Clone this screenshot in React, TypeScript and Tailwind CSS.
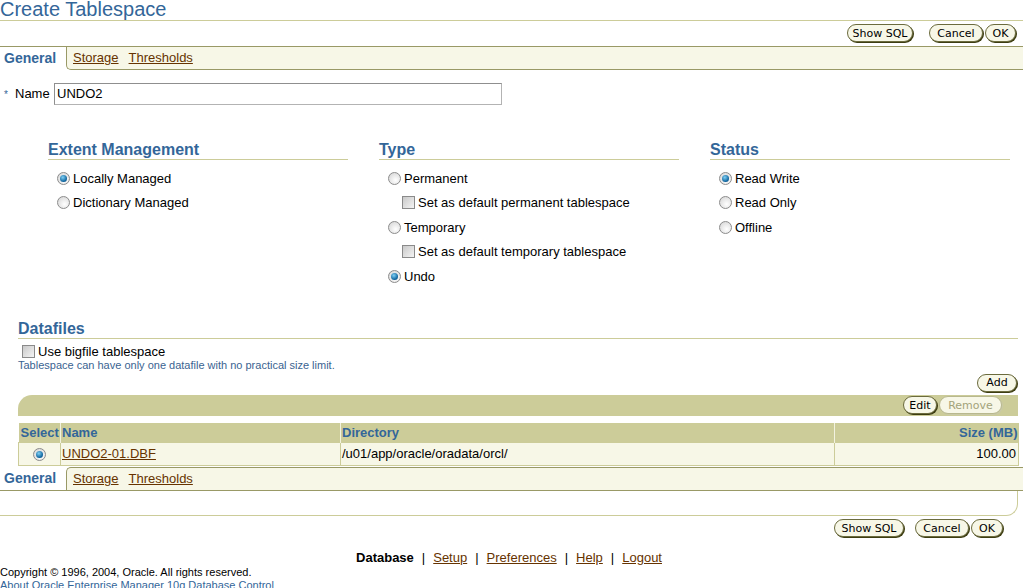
import React from "react";

const blue = "text-[#336699]";

function Btn({ label, w, disabled }: { label: string; w: string; disabled?: boolean }) {
  return (
    <span
      className={`inline-flex h-[18px] items-center justify-center rounded-full bg-[#f7f7e7] font-['DejaVu_Sans',Tahoma,sans-serif] text-[11px] leading-none ${w} ${
        disabled
          ? "border border-[#b8b88e] text-[#a3a37a] shadow-[1px_1px_0_0_#c9c9a6]"
          : "border border-[#6b6b3d] text-black shadow-[1px_1px_0_0_#3d3d12]"
      }`}
    >
      {label}
    </span>
  );
}

function Radio({ checked }: { checked?: boolean }) {
  return (
    <span className="inline-flex h-[13px] w-[13px] shrink-0 items-center justify-center rounded-full border border-[#8c8c8c] bg-[radial-gradient(circle_at_60%_65%,#ffffff,#d2d2d2)]">
      {checked && (
        <span className="h-[7px] w-[7px] rounded-full bg-[radial-gradient(circle_at_40%_35%,#7fd0f5,#0a5f99_70%,#083c66)]" />
      )}
    </span>
  );
}

function Check() {
  return (
    <span className="inline-block h-[13px] w-[13px] shrink-0 border border-[#8a8a8a] bg-[linear-gradient(135deg,#c9c9c9,#f4f4f4)]" />
  );
}

function Option({ label, checked, box }: { label: string; checked?: boolean; box?: boolean }) {
  return (
    <div className={`flex h-[24.5px] items-center gap-[3px] ${box ? "pl-[14px]" : ""}`}>
      {box ? <Check /> : <Radio checked={checked} />}
      <span>{label}</span>
    </div>
  );
}

function Section({ title, children }: { title: string; children: React.ReactNode }) {
  return (
    <div>
      <div className={`h-[19px] border-b border-[#cccc99] text-[16px] font-bold leading-[18px] ${blue}`}>{title}</div>
      <div className="mt-[6px] pl-[9px]">{children}</div>
    </div>
  );
}

function Tabs({ top }: { top?: boolean }) {
  return (
    <div className={`flex h-[24px] ${top ? "border-t border-[#999966]" : "border-b border-[#999966]"}`}>
      <div className={`flex w-[66px] items-center pl-[4px] text-[14px] font-bold ${blue}`}>General</div>
      <div
        className={`flex flex-1 items-center gap-[10px] border-l border-[#999966] bg-[#f7f7e7] pl-[6px] text-[13px] ${
          top ? "rounded-bl-[5px] border-b" : "rounded-tl-[5px] border-t"
        }`}
      >
        <a className="text-[#663300] underline">Storage</a>
        <a className="text-[#663300] underline">Thresholds</a>
      </div>
    </div>
  );
}

export default function App() {
  return (
    <div className="h-[588px] w-[1023px] overflow-hidden bg-white font-['Liberation_Sans',Arial,sans-serif] text-[13px] text-black">
      <h1 className={`h-[21px] border-b border-[#cccc99] text-[20px] leading-[19px] ${blue}`}>Create Tablespace</h1>

      <div className="mt-[3px] flex justify-end pr-[7px]">
        <Btn label="Show SQL" w="w-[66px]" />
        <span className="w-[16px]" />
        <Btn label="Cancel" w="w-[54px]" />
        <span className="w-[2px]" />
        <Btn label="OK" w="w-[31px]" />
      </div>

      <div className="mt-[4px]">
        <Tabs top />
      </div>

      <div className="mt-[13px] flex items-center">
        <span className={`w-[15px] pl-[4px] text-[10px] ${blue}`}>*</span>
        <span className="w-[39px]">Name</span>
        <div className="flex h-[22px] w-[448px] items-center border border-[#b3b3b3] border-t-[#8f8f8f] border-l-[#8f8f8f] pl-[2px]">
          UNDO2
        </div>
      </div>

      <div className="mt-[36px] grid grid-cols-[300px_300px_300px] gap-x-[31px] pl-[48px]">
        <Section title="Extent Management">
          <Option label="Locally Managed" checked />
          <Option label="Dictionary Managed" />
        </Section>
        <Section title="Type">
          <Option label="Permanent" />
          <Option label="Set as default permanent tablespace" box />
          <Option label="Temporary" />
          <Option label="Set as default temporary tablespace" box />
          <Option label="Undo" checked />
        </Section>
        <Section title="Status">
          <Option label="Read Write" checked />
          <Option label="Read Only" />
          <Option label="Offline" />
        </Section>
      </div>

      <div className="pl-[18px] pr-[5px]">
        <div className={`mt-[31px] h-[19px] border-b border-[#cccc99] text-[16px] font-bold leading-[18px] ${blue}`}>
          Datafiles
        </div>
        <div className="mt-[6px] flex h-[14px] items-center gap-[3px] pl-[4px]">
          <Check />
          <span>Use bigfile tablespace</span>
        </div>
        <div className="text-[11px] leading-[13px] text-[#3a6391]">
          Tablespace can have only one datafile with no practical size limit.
        </div>

        <div className="mt-[2px] flex justify-end pr-[1px]">
          <Btn label="Add" w="w-[40px]" />
        </div>

        <div className="mt-[3px] flex h-[21px] items-center justify-end gap-[2px] rounded-tl-[14px] bg-[#cccc99] pr-[16px]">
          <Btn label="Edit" w="w-[34px]" />
          <Btn label="Remove" w="w-[63px]" disabled />
        </div>

        <table className="mt-[7px] w-[1000px] table-fixed border-collapse">
          <colgroup>
            <col className="w-[42px]" />
            <col className="w-[280px]" />
            <col className="w-[494px]" />
            <col className="w-[184px]" />
          </colgroup>
          <thead>
            <tr className={`h-[20px] bg-[#cccc99] text-left font-bold ${blue}`}>
              <th className="px-[2px] font-bold">Select</th>
              <th className="border-l border-[#f2f2e0] px-[1px] font-bold">Name</th>
              <th className="border-l border-[#f2f2e0] px-[1px] font-bold">Directory</th>
              <th className="border-l border-[#f2f2e0] px-[1px] text-right font-bold">Size (MB)</th>
            </tr>
          </thead>
          <tbody>
            <tr className="h-[23px] bg-[#f7f7e7]">
              <td className="border border-[#cccc99] text-center">
                <span className="inline-flex align-middle">
                  <Radio checked />
                </span>
              </td>
              <td className="border border-[#cccc99] px-[1px]">
                <a className="text-[#663300] underline">UNDO2-01.DBF</a>
              </td>
              <td className="border border-[#cccc99] px-[1px]">/u01/app/oracle/oradata/orcl/</td>
              <td className="border border-[#cccc99] px-[2px] text-right">100.00</td>
            </tr>
          </tbody>
        </table>
      </div>

      <div className="mt-[1px]">
        <Tabs />
        <div className="mr-[5px] h-[25px] rounded-br-[12px] border-r border-b border-[#cccc99]" />
      </div>

      <div className="mt-[3px] flex justify-end pr-[20px]">
        <Btn label="Show SQL" w="w-[70px]" />
        <span className="w-[11px]" />
        <Btn label="Cancel" w="w-[54px]" />
        <span className="w-[2px]" />
        <Btn label="OK" w="w-[32px]" />
      </div>

      <div className="mt-[13px] flex justify-center gap-[8px] pr-[5px] leading-[15px]">
        <span className="font-bold">Database</span>
        <span>|</span>
        <a className="text-[#663300] underline">Setup</a>
        <span>|</span>
        <a className="text-[#663300] underline">Preferences</a>
        <span>|</span>
        <a className="text-[#663300] underline">Help</a>
        <span>|</span>
        <a className="text-[#663300] underline">Logout</a>
      </div>

      <div className="mt-[1px] text-[11px] leading-[13px]">Copyright © 1996, 2004, Oracle. All rights reserved.</div>
      <div className="text-[11px] leading-[13px] text-[#336699]">About Oracle Enterprise Manager 10g Database Control</div>
    </div>
  );
}
